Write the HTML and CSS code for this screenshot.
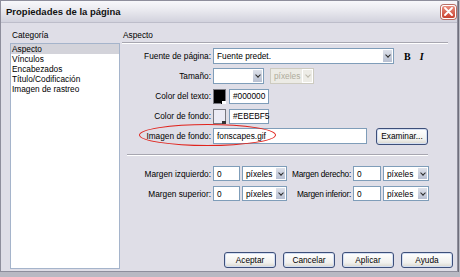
FILE: index.html
```html
<!DOCTYPE html>
<html lang="es">
<head>
    <meta charset="UTF-8">
    <meta name="viewport" content="width=device-width, initial-scale=1.0">
    <title>Propiedades de la página</title>
    <link rel="stylesheet" href="styles.css">
</head>
<body>
    <div class="dialog">
        <div class="titlebar">
            <span class="title">Propiedades de la página</span>
            <span class="close">
                <svg width="9" height="9" viewBox="0 0 9 9"><path d="M1 1L8 8M8 1L1 8" stroke="#fff" stroke-width="1.8" stroke-linecap="round"/></svg>
            </span>
        </div>

        <div class="body">
            <div class="side">
                <div class="heading">Categoría</div>
                <ul class="list">
                    <li class="sel">Aspecto</li>
                    <li>Vínculos</li>
                    <li>Encabezados</li>
                    <li>Título/Codificación</li>
                    <li>Imagen de rastreo</li>
                </ul>
            </div>

            <div class="main">
                <div class="heading rule">Aspecto</div>

                <div class="form">
                    <div class="row">
                        <span class="lbl">Fuente de página:</span>
                        <div class="field select font-sel"><span class="val">Fuente predet.</span><span class="arrow"></span></div>
                        <b class="fmt bold">B</b>
                        <i class="fmt ital">I</i>
                    </div>
                    <div class="row">
                        <span class="lbl">Tamaño:</span>
                        <div class="field select size-sel"><span class="val"></span><span class="arrow"></span></div>
                        <div class="field select unit-off off"><span class="val">píxeles</span><span class="arrow"></span></div>
                    </div>
                    <div class="row">
                        <span class="lbl">Color del texto:</span>
                        <span class="swatch dark"></span>
                        <div class="field hex">#000000</div>
                    </div>
                    <div class="row">
                        <span class="lbl">Color de fondo:</span>
                        <span class="swatch light"></span>
                        <div class="field hex">#EBEBF5</div>
                    </div>
                    <div class="row">
                        <span class="lbl">Imagen de fondo:</span>
                        <div class="field path">fonscapes.gif</div>
                        <button class="btn browse">Examinar...</button>
                        <span class="mark"></span>
                    </div>
                </div>

                <div class="sep"></div>

                <div class="margins">
                    <div class="mrow">
                        <span class="lbl">Margen izquierdo:</span>
                        <div class="field num">0</div>
                        <div class="field select unit"><span class="val">píxeles</span><span class="arrow"></span></div>
                        <span class="lbl2">Margen derecho:</span>
                        <div class="field num">0</div>
                        <div class="field select unit"><span class="val">píxeles</span><span class="arrow"></span></div>
                    </div>
                    <div class="mrow">
                        <span class="lbl">Margen superior:</span>
                        <div class="field num">0</div>
                        <div class="field select unit"><span class="val">píxeles</span><span class="arrow"></span></div>
                        <span class="lbl2">Margen inferior:</span>
                        <div class="field num">0</div>
                        <div class="field select unit"><span class="val">píxeles</span><span class="arrow"></span></div>
                    </div>
                </div>

                <div class="buttons">
                    <button class="btn">Aceptar</button>
                    <button class="btn">Cancelar</button>
                    <button class="btn">Aplicar</button>
                    <button class="btn">Ayuda</button>
                </div>
            </div>
        </div>
    </div>
</body>
</html>
```

FILE: styles.css
```css
body { margin: 0; background: #b9b9c3; font-family: "Liberation Sans", Arial, sans-serif; font-size: 8.3px; color: #000; }

.dialog { width: 458px; height: 272px; box-sizing: border-box; border: 1px solid #8e8e9c; background: #dfdee7; display: flex; flex-direction: column; box-shadow: 1px 1px 0 #6f6f7c; }

/* title bar */
.titlebar { height: 21px; flex: none; display: flex; align-items: center; justify-content: space-between; padding: 0 1px 0 5px; background: linear-gradient(#f8f8fb, #e9e9ef 45%, #d2d2dd); border-bottom: 1px solid #bdbdca; }
.title { font-weight: bold; font-size: 9.5px; color: #111; }
.close { width: 15px; height: 14px; box-sizing: border-box; border: 1px solid #fff; border-radius: 3px; background: linear-gradient(#ea8f80, #c8412f); display: flex; align-items: center; justify-content: center; box-shadow: 0 0 0 1px #b96f66; }

.body { flex: 1; display: flex; gap: 2px; padding: 5px 9px 2px 9px; min-height: 0; }

/* category list */
.side { width: 110px; flex: none; display: flex; flex-direction: column; }
.heading { height: 14px; line-height: 14px; padding-left: 2px; }
.list { flex: 1; margin: 1px 0 0; padding: 0; list-style: none; background: #fff; border: 1px solid #a5b4cb; }
.list li { line-height: 10px; padding-left: 1px; }
.list li.sel { background: #d3d3da; }

/* main panel */
.main { flex: 1; display: flex; flex-direction: column; min-width: 0; }
.heading.rule { border-bottom: 1px solid #a7a6b0; box-shadow: 0 1px 0 #fff; padding-left: 1px; }

.form { margin-top: 5px; display: flex; flex-direction: column; gap: 4px; }
.row { display: flex; align-items: center; height: 16px; position: relative; }
.lbl, .lbl2 { padding-right: 2px; box-sizing: border-box; flex: none; display: flex; justify-content: flex-end; white-space: nowrap; }
.lbl { width: 91px; }
.lbl2 { width: 66px; letter-spacing: -0.25px; }

.field { height: 16px; box-sizing: border-box; border: 1px solid #7f9db9; background: #fff; display: flex; align-items: center; padding-left: 3px; flex: none; white-space: nowrap; }
.select .val { flex: 1; }
.arrow { width: 11px; height: 100%; box-sizing: border-box; background: linear-gradient(#dde1ea, #b7bfd1); border: 1px solid #fff; display: flex; align-items: center; justify-content: center; }
.arrow::after { content: ""; width: 3px; height: 3px; border-right: 1.5px solid #2a2a2a; border-bottom: 1.5px solid #2a2a2a; transform: translateY(-1px) rotate(45deg); }

.font-sel { width: 181px; }
.size-sel { width: 51px; }
.unit-off { width: 44px; margin-left: 6px; }
.off { border-color: #cdcbc0; background: #ecebe5; color: #aeab9c; }
.off .arrow { background: #edece6; }
.off .arrow::after { border-color: #bdbaad; }

.fmt { font-family: "Liberation Serif", serif; font-weight: bold; font-size: 10px; }
.bold { margin-left: 10px; }
.ital { margin-left: 9px; font-style: italic; }

.swatch { width: 13px; height: 15px; box-sizing: border-box; border: 1px solid #77777f; position: relative; flex: none; }
.swatch.dark { background: #000; }
.swatch.light { background: #ebebf5; }
.swatch::after { content: ""; position: absolute; right: -1px; bottom: -1px; width: 4px; height: 3px; }
.swatch.dark::after { background: #fff; border-left: 1px solid #000; }
.swatch.light::after { background: #333; }
.hex { width: 40px; margin-left: 3px; height: 15px; }

.path { width: 154px; }
.mark { position: absolute; left: 17px; top: -4px; width: 137px; height: 22px; box-sizing: border-box; border: 1.5px solid #e0231c; border-radius: 50%; }

.btn { height: 16px; box-sizing: border-box; padding: 0; border: 1px solid #3d4f7a; border-radius: 3px; background: linear-gradient(#fff, #f0f0ee 70%, #d9d6cc); box-shadow: inset 0 0 0 1px #d3def2; font: inherit; color: #000; display: flex; align-items: center; justify-content: center; width: 52px; }
.browse { margin-left: 9px; height: 17px; }

.sep { border-top: 1px solid #a7a6b0; border-bottom: 1px solid #fff; margin: 10px 20px 0 5px; }

.margins { margin-top: 10px; display: flex; flex-direction: column; gap: 5px; }
.mrow { display: flex; align-items: center; height: 15px; }
.mrow .field { height: 15px; }
.num { width: 27px; }
.unit { width: 45px; margin-left: 2px; }
.mrow .lbl2 + .num { width: 28px; }
.mrow .unit:last-child { width: 46px; }

.buttons { margin-top: auto; margin-right: -5px; margin-bottom: 1px; display: flex; justify-content: flex-end; gap: 7px; }
```
